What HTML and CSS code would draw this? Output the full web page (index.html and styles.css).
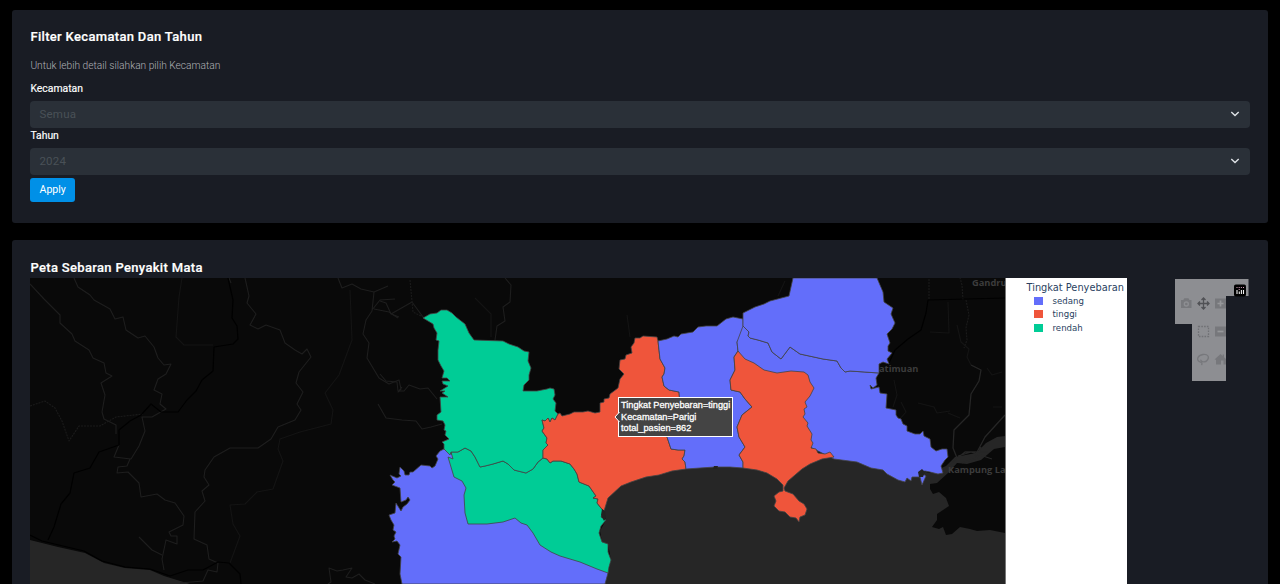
FILE: index.html
```html
<!DOCTYPE html>
<html lang="id">
<head>
<meta charset="utf-8">
<title>Peta Sebaran Penyakit Mata</title>
<link rel="stylesheet" href="styles.css">
</head>
<body>
<main class="page">
  <section class="card filter-card">
    <h4 class="card-title">Filter Kecamatan Dan Tahun</h4>
    <p class="card-description">Untuk lebih detail silahkan pilih Kecamatan</p>
    <form class="filter-form">
      <label class="field-label">Kecamatan</label>
      <div class="select"><span>Semua</span><svg class="chevron" viewBox="0 0 10 6"><path d="M1.3 1 5 4.600 8.700 1"/></svg></div>
      <label class="field-label tahun">Tahun</label>
      <div class="select"><span>2024</span><svg class="chevron" viewBox="0 0 10 6"><path d="M1.3 1 5 4.600 8.700 1"/></svg></div>
      <button class="apply" type="button">Apply</button>
    </form>
  </section>
  <section class="card map-card">
    <h4 class="card-title">Peta Sebaran Penyakit Mata</h4>
    <div class="plot">
      <div class="map-wrap">
        <svg class="map" viewBox="30 278 975 306">
          <g class="sea">
            <path d="M30 540 58 547 85 553 104 563 125 568 150 570 164 576 190 584H30Z"/>
            <path d="M600 584 608 573 611 560 608 544 602 542 600 531 606 520 602 508 608 470 700 460 790 455 860 455 930 473 946 466 955 457 976 453 986 443 997 437 1005 436V447L994 449 981 460 967 464 957 463 948 473 937 483 930 484V489L933 494 939 492 946 498 949 506 937 514V520L932 527 939 529 943 527 946 535 952 534 960 527 970 529 977 531 990 530 1005 533V584Z"/>
          </g>
          <g class="river">
            <path d="M971 365 981 370 979 381 971 394 969 415 954 430 953 448 957 458M975 456 985 437 1005 415M958 456 971 452 992 459M962 463 977 458 981 447M950 464 965 452 988 452"/>
          </g>
          <g class="roads">
            <path d="M30 284 44 299 60 315 60 323 72 334 75 341 89 350 93 358 104 363 106 373 112 376 101 383 105 395 102 412 104 419 116 425 116 434"/>
            <path d="M74 278 78 287 90 295 94 300 110 309 115 319 123 317 126 330 138 338 145 336 154 347 158 358 164 365 171 364 166 374 158 379 154 390 162 394 160 404 166 409 152 417 142 417 145 431 139 446 131 459 114 457 119 445"/>
            <path d="M130 459 127 466 118 467 117 473 128 472 139 483 141 497 157 494 165 500 175 503 184 516 183 525 169 532 171 536 177 536 177 544 166 540 162 559 164 570M139 537 152 550 162 555"/>
            <path d="M229 278 231 283M245 278 249 296 247 303 256 314 250 325 258 329 266 325 280 330 285 343 295 350 302 354 307 349 311 357 299 372 296 383 303 392 297 404 301 410 295 420 278 427 271 439 258 448 230 448 214 457 205 470 204 477 209 485 202 491 205 501 195 512 194 539 207 545 209 559 218 563 217 572 208 570 203 581 180 583"/>
            <path d="M338 278 342 288 352 284 361 289 374 292 388 286M374 292 372 311 366 320 363 334 369 343 367 358 373 368 379 378 389 384 399 380 401 389 398 392 402 387M372 310 380 300 395 299M374 309 389 312 398 318"/>
            <path d="M380 301 386 303 391 314 399 317M391 314 412 302 423 317M505 278 511 285 510 302 503 307 505 321 497 326 495 340M380 374 386 381 397 382 398 391 404 391 409 385 420 389 428 388 437 399M378 404 386 418 402 420 416 421 422 429 431 427 442 424"/>
            <path d="M328 584 331 582 329 568 337 571 343 570 352 568 346 577 352 578 359 574 365 580 375 584"/>
          </g>
          <g class="roads dim">
            <path d="M182 278 179 297 176 337 184 345 213 345M350 290 352 340 339 375 325 393 333 410 331 424 300 432 280 439 278 449 283 461 273 489 257 492 245 504 230 505 233 524 240 536 230 563M475 298 491 314 491 337M778 296 785 281M630 337 627 315"/>
            <path class="dots" d="M30 406 45 401 55 408 62 421 69 441 79 426 100 426 116 417 143 414M410 280 413 312 425 318M929 279V300M963 300 962 285 960 278M966 300 969 315 966 328 967 340 964 348"/>
            <path d="M948 302 949 333 930 332M957 325 961 342 969 349 967 357 971 365M894 380 897 395 893 407M918 403 934 407 937 413 950 411M987 368 992 375 1002 372M948 413 960 418M901 402 906 412 899 420M993 407H1002"/>
          </g>
          <g class="rail">
            <path d="M228 278 233 300 232 318 237 326 238 339 233 344 214 347 213 371 202 380 196 391 187 400 178 412 161 412 151 404 141 415 130 421 119 430 119 445 99 452 90 468 74 473 70 493 61 504 54 527 48 540M30 535 42 541 84 551 102 561 125 567 150 569 170 576 188 570 203 570 218 562 229 563 240 574 241 584"/>
            <path d="M1005 298 928 300 926 313 921 330 908 339 895 350 888 365"/>
          </g>
          <g class="land-label"><text x="972" y="285.500">Gandru</text><text x="879" y="372">atimuan</text><text x="948" y="473">Kampung La</text></g>
          <g class="regions">
            <path class="sedang" d="M444 449 440 451 436 456 438 459 435 466 432 468 430 466 421 465 413 472 410 472 409 475 405 475 404 471 400 467 399 474 401 476 397 478 390 475 393 480 395 482 392 485 400 488 401 502 406 500 408 497 410 500 407 504 403 507 401 511 396 503 395 513 389 515 391 520 394 525 393 530 396 532 394 536 395 539 392 542 397 541 400 545 398 554 401 557 400 574 402 584H605L608 573 600 540 540 470 460 460Z"/>
            <path class="rendah" d="M448 457 453 459 451 452 458 452 465 448 471 451 475 457 480 467 485 466 493 464 503 461 508 464 514 470 526 473 533 469 538 462 543 458 547 459 550 463 553 461 561 461 570 464 574 469 577 474 579 482 589 486 596 496 593 498 598 499 597 503 601 508 604 512 601 517 606 520 601 526 599 533 602 542 608 544 608 552 611 560 609 567 608 573 597 569 580 562 560 556 551 552 540 545 533 533 527 525 521 523 515 518 503 522 487 524 468 524 465 513 464 495 466 488 462 481 454 477 451 467Z"/>
            <path class="rendah" d="M423 318 430 314 437 313 441 310 447 310 452 313 456 317 465 324 469 333 474 340 503 341 509 344 518 347 524 351 529 352 528 361 531 368 529 375 529 380 524 385 523 391 537 391 547 389 550 388 554 389 555 395 553 399 556 403 555 411 558 414 555 420 552 418 550 422 548 418 545 421 542 420 544 428 542 431 547 438 546 443 548 445 543 450 543 458 538 462 533 469 526 473 514 470 508 464 503 461 493 464 485 466 480 467 475 457 471 451 465 448 458 452 451 452 450 455 444 449 444 444 442 442 449 439 445 435 446 431 444 430 445 425 443 421 437 420 437 415 441 412 440 397 448 397 442 393 445 391 440 391 448 386 443 384 442 381 450 381 447 378 442 378 444 371 441 366 438 360 438 350 439 341 436 340 437 333 434 328 433 324Z"/>
            <path class="tinggi" d="M558 414 560 413 562 416 570 414 574 412 583 412 588 411 595 413 600 412 600 403 604 402 604 399 609 398 610 394 618 388 620 379 624 374 619 369 620 360 625 359 626 355 632 353 631 347 634 343 635 338 640 338 643 336 657 337 658 341 660 359 665 368 664 374 662 377 664 386 669 390 679 392 680 405 666 428 667 437 671 449 678 450 685 450 684 456 682 459 685 462 686 469 672 471 659 475 646 477 631 482 621 486 608 498 604 511 601 508 597 503 598 499 593 498 596 496 589 486 579 482 577 474 574 469 570 464 561 461 553 461 550 463 547 459 543 458 543 450 548 445 546 443 547 438 542 431 544 428 542 420 545 421 548 418 550 422 552 418 555 420Z"/>
            <path class="sedang" d="M658 341 667 339 674 336 678 337 681 334 693 332 698 327 706 326 717 326 726 319 733 317 743 319 743 326 747 330 741 336 737 342 738 351 734 357 735 370 730 380 731 390 740 392 745 399 752 407 742 415 737 427 739 437 745 447 739 455 743 462 743 468 730 467 715 467 700 468 686 469 685 462 682 459 684 456 685 450 678 450 671 449 667 437 666 428 680 405 679 392 669 390 664 386 662 377 664 374 665 368 660 359Z"/>
            <path class="sedang" d="M743 326 747 330 749 332 748 336 750 338 758 340 768 343 772 352 781 359 790 347 800 354 823 359 837 361 841 368 845 372 850 371 879 373 876 378 877 385 873 388 870 385 871 389 879 387 880 393 887 394 886 408 896 410 896 415 898 418 901 419 903 424 907 426 907 431 915 434 920 434 923 431 924 436 930 439 931 447 936 451 942 449 947 449 948 457 945 460 941 466 943 473 938 474 930 472 925 471 920 472 926 476 922 485 920 477 912 477 911 481 907 478 905 482 898 480 887 474 883 470 871 468 857 462 834 459 812 448 740 392 738 351 737 342Z"/>
            <path class="sedang" d="M793 278 791 287 789 296 770 301 764 304 755 307 743 313 743 326 747 330 749 332 748 336 750 338 758 340 768 343 772 352 781 359 790 347 800 354 823 359 837 361 841 368 845 372 850 371 879 373 879 364 883 362 889 364 887 359 892 353 888 351 888 346 890 343 887 334 892 329 895 323 891 314 893 308 884 302 883 292 877 278Z"/>
            <path class="tinggi" d="M738 351 745 359 754 363 764 370 777 373 791 371 804 372 808 375 810 382 814 388 810 396 805 402 807 407 804 409 805 414 803 417 808 423 807 426 812 434 811 440 813 443 811 448 816 449 818 453 825 454 830 452 834 457 822 459 810 464 802 469 788 481 784 488 785 491 793 494 799 501 804 504 807 509 805 515 800 517 799 522 796 518 790 517 785 512 779 511 774 506 776 501 774 496 779 492 783 491 783 485 777 479 767 473 757 470 743 468 743 462 739 455 745 447 739 437 737 427 742 415 752 407 745 399 740 392 731 390 730 380 735 370 734 357Z"/>
          </g>
          <path class="islet" d="M714 466h4l-1 3h-4zM602 509l3 2 1 7-2 3-3-6zM918 472l4-3 3 3-2 5-4 0z"/>
        </svg>
        <div class="tooltip"><svg class="pointer" viewBox="0 0 6 12"><path d="M5.5 1 1 6 5.5 11"/></svg><div>Tingkat Penyebaran=tinggi</div><div>Kecamatan=Parigi</div><div>total_pasien=862</div></div>
      </div>
      <div class="legend">
        <div class="legend-title">Tingkat Penyebaran</div>
        <div class="legend-item"><i class="swatch c1"></i>sedang</div>
        <div class="legend-item"><i class="swatch c2"></i>tinggi</div>
        <div class="legend-item"><i class="swatch c3"></i>rendah</div>
      </div>
      <svg class="modebar" viewBox="0 0 74 103">
        <path class="bar-bg" d="M0 0H73.500V17H51V102H17V45H0Z"/>
        <g class="icon">
          <path d="M6 21h2.300l1-1.800h4.200l1 1.800H16.500v8H6Z"/><circle class="hole" cx="11.300" cy="25" r="2.700"/><circle cx="11.300" cy="25" r="1.300"/>
          <path d="M40 19.500h11v10H40Z"/><path class="cut" d="M42.500 24.500h6M45.500 21.500v6"/>
          <path d="M40 47.500h11v10H40Z"/><path class="cut" d="M42.500 52.500h6"/>
          <path class="dash" d="M23.500 47.500H33.500V57.500H23.500Z"/>
          <path class="lasso" d="M26 83.500C20 81 23 76 28 75.500S35 78 32 81.500C30.500 83.500 27 83 26 81.500S28 84 26.500 86"/>
          <path d="M39.500 80.500 45.500 75l2.200 2v-1.500H49v2.700l2 1.800v5.500h-2.500v-4h-2.500v4H41v-4.800Z"/>
        </g>
        <path class="move" d="M28.500 19.500v10M23.500 24.500h10M26.500 21l2-2 2 2M26.500 28l2 2 2-2M25 22.500l-2 2 2 2M32 22.500l2 2-2 2"/>
        <rect class="logo" x="59" y="5.500" width="12" height="12" rx="1.800"/>
        <path class="logo-bars" d="M62 11v4M68.500 11v4M64.300 12.500V15M66.400 11v4"/>
        <path class="logo-dots" d="M61.500 8.500h1M63.700 8.500h1M63.700 10.500h1M65.900 8.500h1M68 8.500h1"/>
      </svg>
    </div>
  </section>
</main>
</body>
</html>
```
FILE: styles.css
```css
* { box-sizing: border-box; }
body {
  margin: 0;
  background: #000;
  color: #fff;
  font-family: Roboto, "Liberation Sans", sans-serif;
}
.page { display: flex; flex-direction: column; gap: 17px; height: 584px; padding: 10px 12px 0; overflow: hidden; }
.card { background: #191c24; border-radius: 3px; padding: 18px 18px 0 18.4px; }
.filter-card { height: 213px; }
.map-card { height: 344px; padding-left: 18px; border-radius: 3px 3px 0 0; }
.card-title {
  margin: 0; font-size: 13px; line-height: 18px; font-weight: 500;
  letter-spacing: .33px; white-space: nowrap; -webkit-text-stroke: .2px #fff;
}
.card-description { margin: 12px 0 0; font-size: 10.2px; line-height: 16px; font-weight: 300; color: #b0b1b5; }
.filter-form { display: flex; flex-direction: column; }
.field-label { margin-top: 8px; font-size: 10.4px; line-height: 14px; height: 19px; -webkit-text-stroke: .15px #fff; }
.field-label.tahun { margin-top: 1px; height: 19.4px; }
.select {
  display: flex; align-items: center; justify-content: space-between;
  height: 26.700px; padding: 0 10px 0 9px; border-radius: 4px;
  background: #2a3038; color: #495057; font-size: 11.5px; letter-spacing: .25px;
}
.chevron { width: 10px; height: 6px; fill: none; stroke: #dee2e6; stroke-width: 1.4; }
.apply {
  align-self: flex-start; width: 44.6px; height: 24px; margin-top: 3.600px; padding: 0;
  border: 0; border-radius: 3px; background: #0090e7; color: #fff;
  font: 400 10.6px/22px Roboto, sans-serif;
}
.map-card .card-title { line-height: 20px; height: 20px; padding-left: .4px; }
.plot { display: flex; align-items: flex-start; height: 306px; }
.map-wrap { position: relative; width: 975px; height: 306px; }
.map { display: block; width: 975px; height: 306px; background: #090909; }
.sea { fill: #262626; }
.river { fill: none; stroke: #262626; stroke-width: 1.3; stroke-linejoin: round; }
.roads { fill: none; stroke: #1e1e1e; stroke-width: 1.1; stroke-linejoin: round; }
.roads.dim { stroke: #141414; }
.dots { stroke: #1b1b1b; stroke-dasharray: 2 1; }
.rail { fill: none; stroke: #010101; stroke-width: 1.2; stroke-linejoin: round; }
.land-label { fill: #3c3c3c; font: 700 9.3px "Open Sans", sans-serif; }
.regions { stroke: #444; stroke-width: .8; stroke-linejoin: round; }
.sedang { fill: #636efa; }
.tinggi { fill: #ef553b; }
.rendah { fill: #00cc96; }
.islet { fill: #222; }
.tooltip {
  position: absolute; left: 588px; top: 119px; width: 115px; height: 40px;
  padding: 2px 0 0 2px; border: 1px solid #fff; background: #444;
  font: 9.2px/11.7px "Liberation Sans", Arial, sans-serif; white-space: nowrap;
  -webkit-text-stroke: .3px #fff;
}
.pointer { position: absolute; left: -5px; top: 13px; width: 6px; height: 12px; fill: #444; stroke: #fff; }
.legend {
  width: 122px; height: 306px; padding: 3px 0 0 20.500px; background: #fff;
  border-left: 1px solid #777; color: #2a3f5f; font-family: "DejaVu Sans", sans-serif;
}
.legend-title { font-size: 9.8px; line-height: 13px; white-space: nowrap; }
.legend-item { display: flex; align-items: center; gap: 9.500px; height: 13.5px; padding-left: 7.500px; font-size: 8.6px; }
.swatch { width: 9px; height: 8px; }
.c1 { background: #636efa; }
.c2 { background: #ef553b; }
.c3 { background: #00cc96; }
.modebar { width: 74px; height: 103px; margin: 1px 0 0 48px; }
.bar-bg { fill: #8d8e92; }
.icon { fill: #77787c; }
.hole { fill: #8d8e92; }
.cut { fill: none; stroke: #96979a; stroke-width: 1.7; }
.dash { fill: none; stroke: #707175; stroke-width: 1.3; stroke-dasharray: 1.6 1.2; }
.lasso { fill: none; stroke: #77787c; stroke-width: 1.3; }
.move { fill: none; stroke: #505155; stroke-width: 1.3; }
.logo { fill: #000; }
.logo-bars { stroke: #eee; stroke-width: 1.1; }
.logo-dots { stroke: #d7a0bd; stroke-width: 1; }
```
